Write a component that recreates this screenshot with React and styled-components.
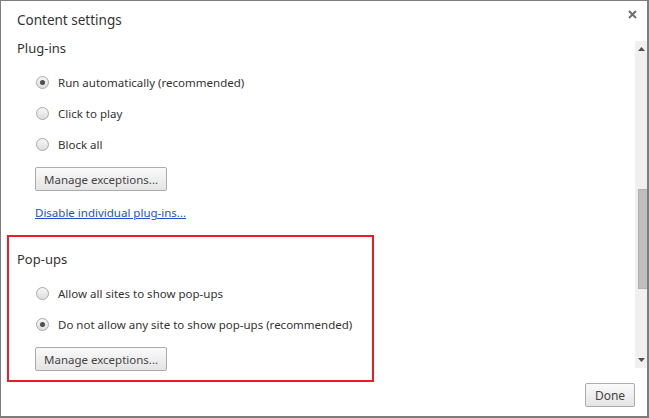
import React from "react";
import styled, { createGlobalStyle } from "styled-components";

const GlobalStyle = createGlobalStyle`
  html, body {
    margin: 0;
    padding: 0;
    background: #fff;
  }
  body {
    font-family: "Noto Sans", "Open Sans", Arial, sans-serif;
    color: #333;
  }
`;

const Dialog = styled.div`
  position: relative;
  width: 649px;
  height: 418px;
  box-sizing: border-box;
  border: 2px solid #7d7d7d;
  border-top-width: 1px;
  border-left-width: 1px;
  background: #fff;
  display: flex;
  flex-direction: column;
  overflow: hidden;
`;

const Header = styled.div`
  height: 38px;
  display: flex;
  align-items: flex-start;
  justify-content: space-between;
  padding: 0 8px 0 16px;
`;

const Title = styled.div`
  font-size: 13.5px;
  line-height: 18px;
  margin-top: 10px;
  color: #333;
`;

const Close = styled.button`
  border: 0;
  background: none;
  padding: 0;
  width: 14px;
  height: 14px;
  display: flex;
  align-items: center;
  justify-content: center;
  margin-top: 6px;
`;

const Body = styled.div`
  height: 333px;
  display: flex;
`;

const Scroller = styled.div`
  flex: 1;
  padding-left: 16px;
`;

const Section = styled.div`
  margin-top: ${({ $top }) => $top}px;
`;

const Heading = styled.div`
  font-size: 13px;
  line-height: 18px;
  color: #333;
`;

const Options = styled.div`
  margin-top: 10px;
  padding-left: 18px;
`;

const Row = styled.label`
  height: 31px;
  display: flex;
  align-items: center;
  font-size: 11.5px;
  color: #333;
`;

const Radio = styled.span`
  width: 13px;
  height: 13px;
  box-sizing: border-box;
  border-radius: 50%;
  border: 1px solid #a9a9a9;
  background: linear-gradient(#f6f6f6, #dedede);
  margin-left: 1px;
  margin-right: 9px;
  display: flex;
  align-items: center;
  justify-content: center;

  &::after {
    content: "";
    width: 5px;
    height: 5px;
    border-radius: 50%;
    background: #4d4d4d;
    display: ${({ $checked }) => ($checked ? "block" : "none")};
  }
`;

const Button = styled.button`
  height: 24px;
  box-sizing: border-box;
  padding: 0 8px;
  border: 1px solid #acacac;
  border-radius: 2px;
  background: linear-gradient(#fafafa, #e4e4e4);
  font-family: inherit;
  font-size: 11.5px;
  color: #444;
  margin-top: ${({ $top }) => $top || 0}px;
  display: block;
`;

const Link = styled.a`
  display: block;
  margin-top: 14px;
  font-size: 11.5px;
  line-height: 16px;
  color: #1a4fd0;
  text-decoration: underline;
  width: fit-content;
`;

const ScrollBar = styled.div`
  width: 12px;
  margin-top: 2px;
  background: #f0f0f0;
  display: flex;
  flex-direction: column;
  align-items: flex-end;
  height: 327px;
`;

const Arrow = styled.div`
  width: 12px;
  height: 16px;
  display: flex;
  align-items: center;
  justify-content: center;
`;

const Thumb = styled.div`
  width: 9px;
  height: 100px;
  margin-top: ${({ $top }) => $top}px;
  background: #bfbfbf;
  border: 1px solid #b0b0b0;
  border-right: 0;
  box-sizing: border-box;
`;

const Spacer = styled.div`
  flex: 1;
`;

const Footer = styled.div`
  flex: 1;
  display: flex;
  justify-content: flex-end;
  align-items: flex-start;
  padding: 11px 12px 0 0;
`;

const DoneButton = styled(Button)`
  width: 50px;
  padding: 0;
  font-size: 12px;
`;

const Highlight = styled.div`
  position: absolute;
  left: 6px;
  top: 234px;
  width: 367px;
  height: 147px;
  box-sizing: border-box;
  border: 2px solid #ed1c24;
  pointer-events: none;
`;

const RadioRow = ({ checked, children }) => (
  <Row>
    <Radio $checked={checked} />
    {children}
  </Row>
);

export default function App() {
  return (
    <>
      <GlobalStyle />
      <Dialog>
        <Header>
          <Title>Content settings</Title>
          <Close aria-label="Close">
            <svg width="9" height="9" viewBox="0 0 9 9">
              <path d="M1 1L8 8M8 1L1 8" stroke="#6f6f6f" strokeWidth="2" />
            </svg>
          </Close>
        </Header>
        <Body>
          <Scroller>
            <Section $top={0}>
              <Heading>Plug-ins</Heading>
              <Options>
                <RadioRow checked>Run automatically (recommended)</RadioRow>
                <RadioRow>Click to play</RadioRow>
                <RadioRow>Block all</RadioRow>
                <Button $top={7}>Manage exceptions...</Button>
                <Link href="#">Disable individual plug-ins...</Link>
              </Options>
            </Section>
            <Section $top={29}>
              <Heading>Pop-ups</Heading>
              <Options>
                <RadioRow>Allow all sites to show pop-ups</RadioRow>
                <RadioRow checked>
                  Do not allow any site to show pop-ups (recommended)
                </RadioRow>
                <Button $top={7}>Manage exceptions...</Button>
              </Options>
            </Section>
          </Scroller>
          <ScrollBar>
            <Arrow>
              <svg width="7" height="4" viewBox="0 0 7 4">
                <path d="M0 4L3.5 0L7 4Z" fill="#505050" />
              </svg>
            </Arrow>
            <Thumb $top={132} />
            <Spacer />
            <Arrow>
              <svg width="7" height="4" viewBox="0 0 7 4">
                <path d="M0 0L7 0L3.5 4Z" fill="#505050" />
              </svg>
            </Arrow>
          </ScrollBar>
        </Body>
        <Footer>
          <DoneButton>Done</DoneButton>
        </Footer>
        <Highlight />
      </Dialog>
    </>
  );
}
